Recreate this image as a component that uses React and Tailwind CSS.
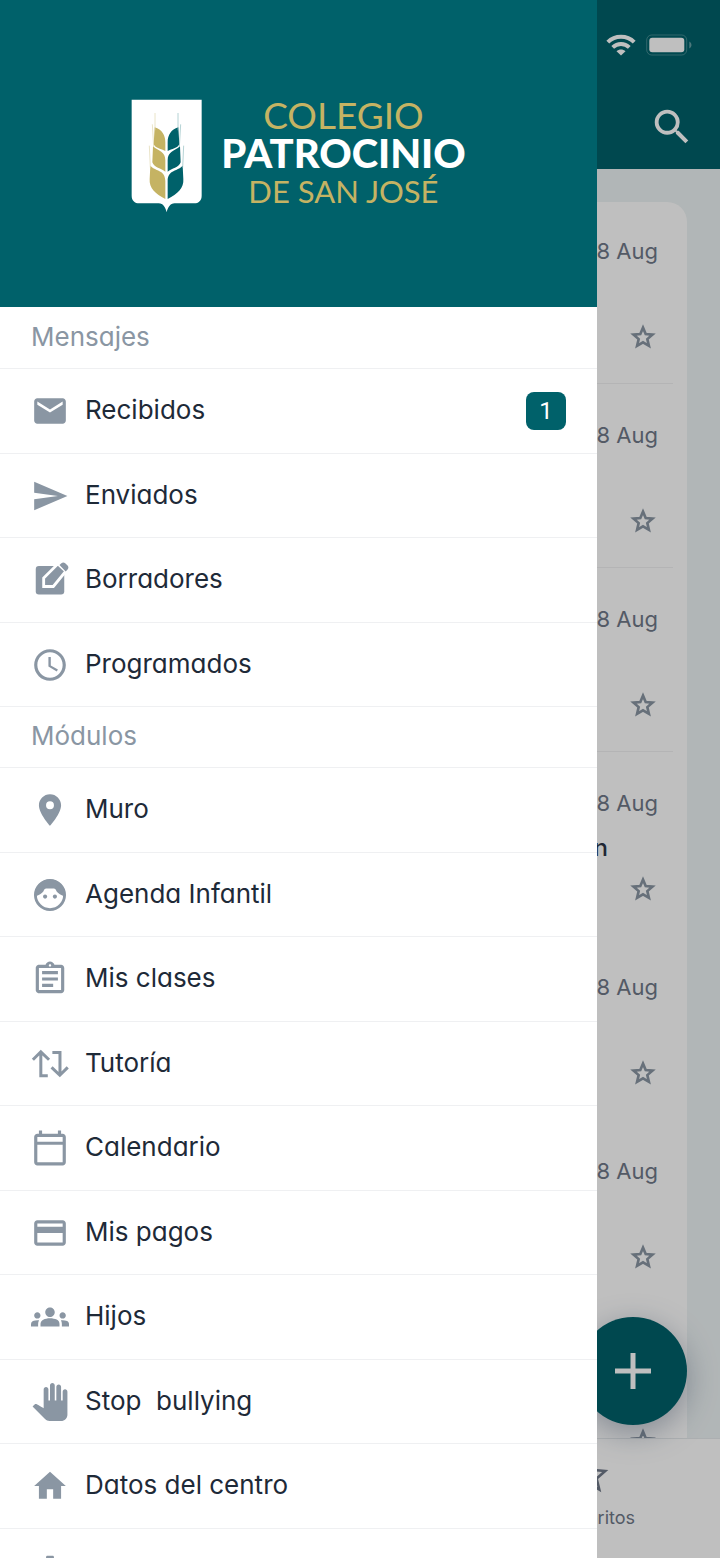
import {
  MdAccessTime,
  MdCreditCard,
  MdEmail,
  MdGroups,
  MdHome,
  MdOutlineAssignment,
  MdOutlineCalendarToday,
  MdPanTool,
  MdPlace,
  MdSearch,
  MdSend,
  MdSettings,
} from 'react-icons/md';

function DraftIcon({ className }) {
  return (
    <svg className={className} viewBox="0 0 24 24" fill="currentColor">
      <rect x="3" y="3.1" width="18" height="18" rx="2" />
      <path d="M8 16.1V10.8L17 1.8 22 6.4 14.1 16.1z" stroke="white" strokeWidth="1.8" />
      <path d="M18 2.6l1.2-1.2c.7-.7 1.7-.7 2.4 0l1.5 1.5c.7.7.7 1.7 0 2.4l-1.2 1.3z" />
    </svg>
  );
}

function FaceIcon({ className }) {
  return (
    <svg className={className} viewBox="0 0 24 24" fill="currentColor">
      <circle cx="12" cy="12" r="9.2" fill="none" stroke="currentColor" strokeWidth="1.8" />
      <path d="M2.4 12.9C5 12.3 7 11 7.9 9.6 8.3 8.6 8.7 7.9 9.6 7.9h4.8c.9 0 1.3.7 1.7 1.7.9 1.4 2.9 2.7 5.5 3.3C22 6.5 17.5 2.2 12 2.2S2 6.5 2.4 12.9z" />
      <circle cx="8.9" cy="13" r="1.3" />
      <circle cx="15.1" cy="13" r="1.3" />
    </svg>
  );
}

function SwapIcon({ className }) {
  return (
    <svg className={className} viewBox="0 0 24 24" fill="none" stroke="currentColor" strokeWidth="1.9">
      <path d="M10.6 19.4H6.2V4.3M1.2 9.3l5-5 5.2 5" />
      <path d="M13.5 4.7h4.8v14.4M13 14.1l5.2 5 5-5" />
    </svg>
  );
}

function StarIcon({ className }) {
  return (
    <svg className={className} viewBox="0 0 24 24" fill="none" stroke="currentColor" strokeWidth="2.1">
      <path d="M12 4.500l2.150 5.100 5.500.48-4.180 3.620 1.260 5.380L12 16.220l-4.730 2.860 1.260-5.380-4.180-3.620 5.500-.48z" />
    </svg>
  );
}

const mensajes = [
  { label: 'Recibidos', icon: MdEmail, badge: 1 },
  { label: 'Enviados', icon: MdSend },
  { label: 'Borradores', icon: DraftIcon },
  { label: 'Programados', icon: MdAccessTime },
];

const modulos = [
  { label: 'Muro', icon: MdPlace },
  { label: 'Agenda Infantil', icon: FaceIcon },
  { label: 'Mis clases', icon: MdOutlineAssignment },
  { label: 'Tutoría', icon: SwapIcon },
  { label: 'Calendario', icon: MdOutlineCalendarToday },
  { label: 'Mis pagos', icon: MdCreditCard },
  { label: 'Hijos', icon: MdGroups },
  { label: 'Stop  bullying', icon: MdPanTool },
  { label: 'Datos del centro', icon: MdHome },
  { label: '', name: 'Ajustes', icon: MdSettings },
];

const messages = [
  { date: '8 Aug', divider: true },
  { date: '8 Aug', divider: true },
  { date: '8 Aug', divider: true },
  { date: '8 Aug', subject: 'n' },
  { date: '8 Aug' },
  { date: '8 Aug' },
  { date: '8 Aug' },
];

function Logo() {
  return (
    <div className="flex items-center gap-[18px] pt-1">
      <svg className="w-[72px] h-[114px] shrink-0" viewBox="59 56 216 342">
        <path fill="white" d="M61 58H271V346C271 360 262 369 248 369H190C176 370 170 380 166 396C162 380 156 370 142 369H84C70 369 61 360 61 346z" />
        <g fill="#c5b363">
          <path d="M130 141C152 148 162 164 162 186V212C150 206 132 204 127 192z" />
          <path d="M125 198C142 214 162 212 162 240V274C150 264 128 262 123 246z" />
          <path d="M117 256C134 274 162 268 162 302V356C132 340 113 324 115 296z" />
        </g>
        <g fill="#00616a">
          <path d="M201 141C179 148 169 164 169 186V212C181 206 199 204 204 192z" />
          <path d="M206 198C189 214 169 212 169 240V274C181 264 203 262 208 246z" />
          <path d="M214 256C197 274 169 268 169 302V356C199 340 218 324 216 296z" />
        </g>
        <g fill="none" strokeWidth="2">
          <path stroke="#e0d6ac" d="M131 98V150M123 132L127 200M114 196L117 262" />
          <path stroke="#8fbcc0" d="M200 98V150M208 132L204 200M217 196L214 262" />
        </g>
      </svg>
      <div className="flex flex-col items-center pb-1.5 font-['Lato',sans-serif] whitespace-nowrap">
        <span className="text-[37px] leading-[38px] text-[#c5b363]">COLEGIO</span>
        <span className="text-[40px] leading-[38px] font-black text-white">PATROCINIO</span>
        <span className="text-[31px] leading-[38px] text-[#c5b363]">DE SAN JOSÉ</span>
      </div>
    </div>
  );
}

function MenuItem({ item }) {
  const Icon = item.icon;
  return (
    <li className="odd:h-[85px] even:h-[84px] border-b border-[#eff0f2]">
      <a href="#" aria-label={item.name} className="h-full flex items-center gap-4 px-[31px]">
        <Icon className="size-[38px] shrink-0 text-[#8a96a3]" />
        <span className="flex-1 pb-0.5 text-[26px] leading-8 text-[#1e2a38] whitespace-pre">{item.label}</span>
        {item.badge && (
          <span className="w-10 h-[38px] rounded-lg bg-[#00616a] text-white text-2xl font-['Roboto',sans-serif] flex items-center justify-center">
            {item.badge}
          </span>
        )}
      </a>
    </li>
  );
}

function MenuSection({ title, items }) {
  return (
    <section>
      <h2 className="h-[61px] px-[31px] pb-0.5 flex items-center border-b border-[#eff0f2] text-[26px] leading-8 text-[#8a96a3]">
        {title}
      </h2>
      <ul>
        {items.map((item) => (
          <MenuItem key={item.label} item={item} />
        ))}
      </ul>
    </section>
  );
}

function StatusBar() {
  return (
    <div className="flex items-center justify-end gap-2.5 pr-7">
      <svg className="w-[30px] h-[22px]" viewBox="0 0 30 22">
        <path fill="none" stroke="white" strokeWidth="4" d="M1.8 8.2C9 1 21 1 28.2 8.2M6.7 13.4C11.5 8.9 18.5 8.9 23.3 13.4" />
        <path fill="white" d="M15 21.5L10.5 17.2C13 14.8 17 14.8 19.5 17.2z" />
      </svg>
      <svg className="w-[46px] h-[22px]" viewBox="0 0 46 22">
        <rect x="0.7" y="1" width="40" height="20" rx="5" fill="none" stroke="white" strokeOpacity="0.25" />
        <rect x="3.3" y="3.7" width="35" height="14.6" rx="3" fill="white" />
        <path d="M43.3 7.5C46.2 9 46.2 13 43.3 14.5z" fill="white" fillOpacity="0.4" />
      </svg>
    </div>
  );
}

function MessageRow({ message }) {
  return (
    <li
      className={`h-[184px] first:h-[182px] border-b pb-[31px] pr-[15px] flex flex-col justify-end items-end ${
        message.divider ? 'border-[#f0f1f2]' : 'border-transparent'
      }`}
    >
      <span className="text-[22px] leading-8 text-[#6f7888]">{message.date}</span>
      <span className="h-8 mt-[13px] mb-2.5 pr-[50px] text-2xl leading-8 font-medium text-[#2c3547]">
        {message.subject}
      </span>
      <button type="button" aria-label="Marcar como favorito">
        <StarIcon className="size-[30px] text-[#8a96a3]" />
      </button>
    </li>
  );
}

function Inbox() {
  return (
    <div className="h-full flex flex-col bg-[#edf3f4]">
      <header className="h-[169px] shrink-0 bg-[#00616a] text-white flex flex-col pt-[34px]">
        <StatusBar />
        <button type="button" aria-label="Buscar" className="self-end mt-12 mr-[25px]">
          <MdSearch className="size-[46px]" />
        </button>
      </header>

      <main className="flex-1 min-h-0 overflow-hidden pt-[33px] px-[33px]">
        <ul className="bg-white rounded-t-[20px] px-[14px]">
          {messages.map((message, i) => (
            <MessageRow key={i} message={message} />
          ))}
        </ul>
      </main>

      <nav className="h-[120px] shrink-0 bg-white border-t border-[#e6eaec] flex justify-end pr-[85px]">
        <a href="#" className="flex flex-col items-center pt-3.5 text-[#6f7888]">
          <svg className="size-[43px] mr-3" viewBox="0 0 24 24" fill="none" stroke="currentColor" strokeWidth="1.4">
            <path d="M12 3.5l2.5 6 6.3.5-4.8 4.2 1.5 6.2L12 17.1l-5.5 3.3L8 14.2 3.2 10l6.3-.5z" />
          </svg>
          <span className="text-lg leading-6 mt-2.5">Favoritos</span>
        </a>
      </nav>

      <button
        type="button"
        aria-label="Nuevo mensaje"
        className="absolute right-[33px] bottom-[133px] size-[108px] rounded-full bg-[#00616a] text-white flex items-center justify-center shadow-[0_8px_30px_rgba(60,80,110,0.4)]"
      >
        <svg className="size-9" viewBox="0 0 36 36" stroke="currentColor" strokeWidth="5">
          <path d="M18 0v36M0 18h36" />
        </svg>
      </button>
    </div>
  );
}

export default function App() {
  return (
    <div className="relative h-screen overflow-hidden font-['Inter',sans-serif] [font-feature-settings:'cv11']">
      <Inbox />
      <div className="absolute inset-0 bg-black/25" />
      <aside className="absolute inset-y-0 left-0 w-[82.9%] overflow-hidden bg-white">
        <div className="h-[307px] bg-[#00616a] flex items-center justify-center">
          <Logo />
        </div>
        <div className="pt-px">
          <MenuSection title="Mensajes" items={mensajes} />
          <MenuSection title="Módulos" items={modulos} />
        </div>
      </aside>
    </div>
  );
}
